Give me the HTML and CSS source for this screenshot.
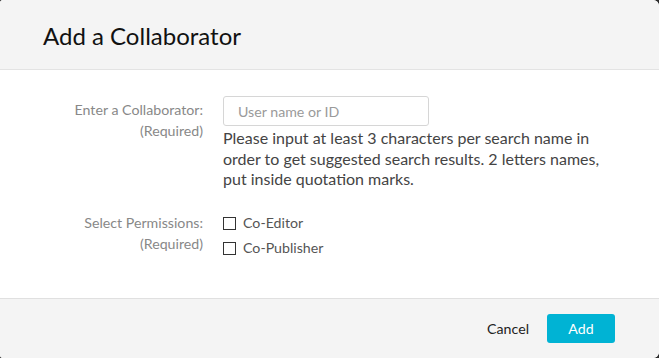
FILE: index.html
```html
<!DOCTYPE html>
<html>
<head>
<meta charset="utf-8">
<link rel="stylesheet" href="styles.css">
</head>
<body>
<div class="modal">
  <div class="modal-header">
    <h1 class="title">Add a Collaborator</h1>
  </div>
  <div class="modal-body">
    <div class="row row-collab">
      <div class="label">Enter a Collaborator:<br>(Required)</div>
      <div class="field">
        <input class="text-input" type="text" placeholder="User name or ID">
        <p class="help">Please input at least 3 characters per search name in order to get suggested search results. 2 letters names, put inside quotation marks.</p>
      </div>
    </div>
    <div class="row row-perm">
      <div class="label">Select Permissions:<br>(Required)</div>
      <div class="field checks">
        <label class="check"><span class="box"></span>Co-Editor</label>
        <label class="check"><span class="box"></span>Co-Publisher</label>
      </div>
    </div>
  </div>
  <div class="modal-footer">
    <button class="btn-link">Cancel</button>
    <button class="btn-primary">Add</button>
  </div>
</div>
</body>
</html>
```

FILE: styles.css
```css
html, body {
  margin: 0;
  padding: 0;
  background: #2b2b2b;
  width: 659px;
  height: 358px;
  overflow: hidden;
}
body {
  font-family: Lato, "Open Sans", sans-serif;
}
.modal {
  width: 659px;
  height: 358px;
  background: #fff;
  border-radius: 3px 6px 6px 3px;
  overflow: hidden;
  display: flex;
  flex-direction: column;
}
.modal-header {
  height: 69px;
  background: #f4f4f4;
  border-bottom: 1px solid #e3e3e3;
  display: flex;
  align-items: center;
  padding-left: 43px;
  box-sizing: content-box;
}
.title {
  margin: 0;
  font-size: 24px;
  font-weight: 400;
  color: #111;
  padding-top: 1px;
}
.modal-body {
  flex: 1;
  padding-top: 26px;
}
.row {
  display: flex;
}
.label {
  width: 203px;
  text-align: right;
  font-size: 14.2px;
  line-height: 21px;
  color: #888;
  padding-top: 3px;
}
.field {
  margin-left: 20px;
}
.text-input {
  display: block;
  box-sizing: border-box;
  width: 206px;
  height: 30px;
  border: 1px solid #d6d6d6;
  border-radius: 3px;
  padding: 0 14px;
  font-family: Lato, sans-serif;
  font-size: 14.2px;
  color: #333;
  outline: none;
}
.text-input::placeholder {
  color: #9a9a9a;
}
.help {
  margin: 0;
  width: 382px;
  font-size: 16px;
  line-height: 20.5px;
  color: #444;
  padding-top: 2px;
}
.row-perm {
  margin-top: 19px;
}
.checks {
  display: flex;
  flex-direction: column;
  padding-top: 2px;
}
.check {
  display: flex;
  align-items: center;
  font-size: 14.2px;
  line-height: 20px;
  height: 25px;
  color: #555;
}
.box {
  width: 11px;
  height: 11px;
  border: 1px solid #333;
  margin-right: 7px;
  background: #fff;
}
.modal-footer {
  height: 59px;
  background: #f4f4f4;
  border-top: 1px solid #e0e0e0;
  display: flex;
  align-items: center;
  justify-content: flex-end;
  padding-right: 44px;
}
.btn-link {
  background: none;
  border: none;
  font-family: Lato, sans-serif;
  font-size: 14.2px;
  color: #222;
  padding: 0;
  margin-right: 18px;
}
.btn-primary {
  width: 68px;
  height: 29px;
  background: #00b3d4;
  border: none;
  border-radius: 3px;
  color: #fff;
  font-family: Lato, sans-serif;
  font-size: 14.2px;
  padding: 0;
}
```
